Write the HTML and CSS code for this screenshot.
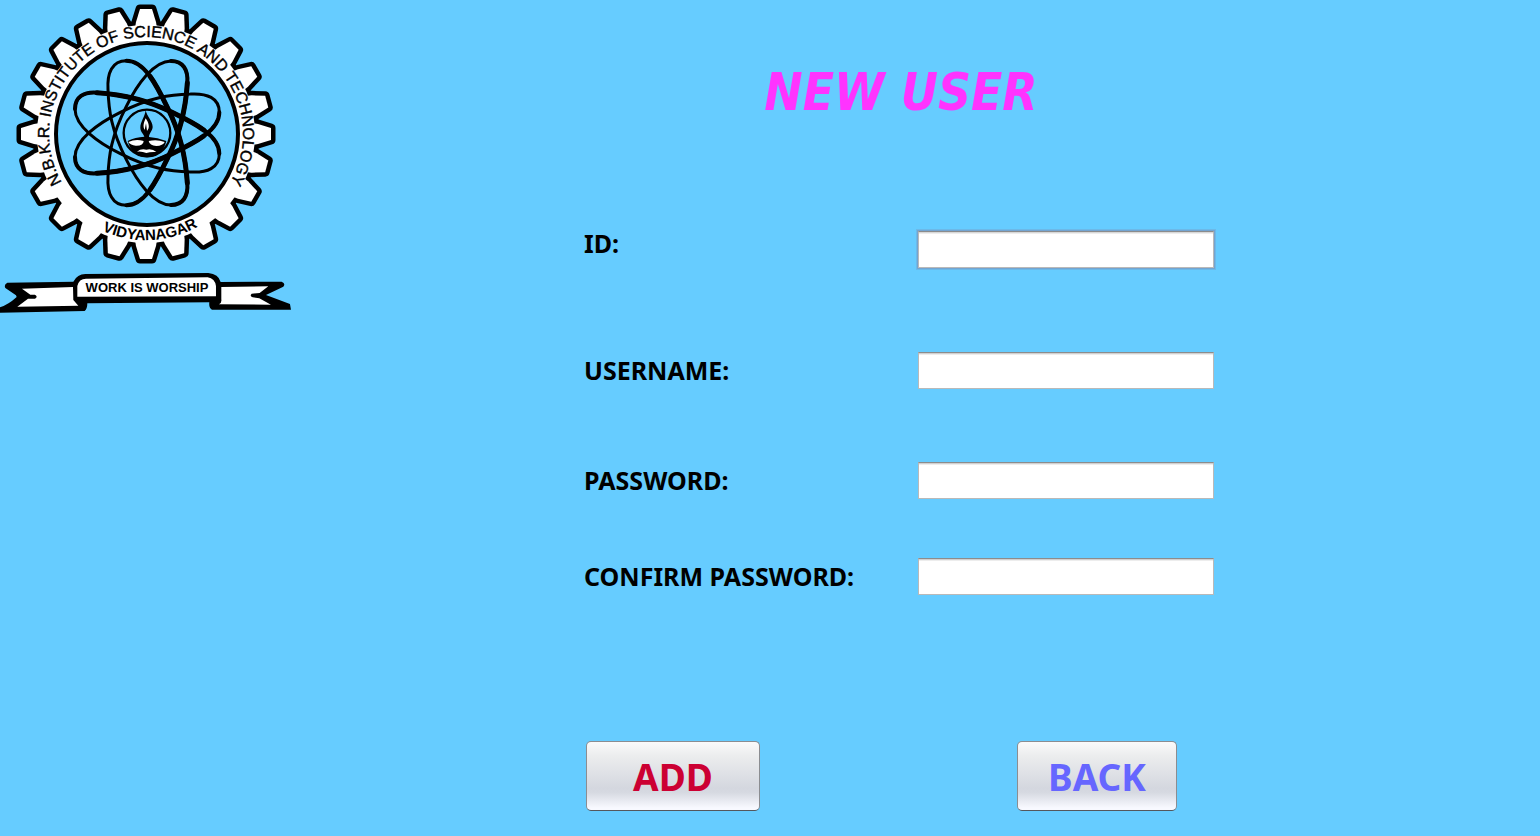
FILE: index.html
```html
<!DOCTYPE html>
<html lang="en">
<head>
<meta charset="utf-8">
<title>New User</title>
<link rel="stylesheet" href="styles.css">
</head>
<body class="page">
<header class="brand">
<svg class="logo" viewBox="0 0 292 316" role="img" aria-label="N.B.K.R. Institute of Science and Technology, Vidyanagar">
  <defs>
    <path id="tooth" d="M-11 -106 L-10 -112 L-6 -125 H6 L10 -112 L11 -106 Z"/>
    <g id="quarter">
      <use href="#tooth"/>
      <use href="#tooth" transform="rotate(15)"/>
      <use href="#tooth" transform="rotate(30)"/>
      <use href="#tooth" transform="rotate(45)"/>
      <use href="#tooth" transform="rotate(60)"/>
      <use href="#tooth" transform="rotate(75)"/>
    </g>
    <g id="gear">
      <circle r="109"/>
      <use href="#quarter"/>
      <use href="#quarter" transform="rotate(90)"/>
      <use href="#quarter" transform="rotate(180)"/>
      <use href="#quarter" transform="rotate(270)"/>
    </g>
    <path id="arc-top" d="M-84 48.500 A97 97 0 1 1 84 48.500"/>
    <path id="arc-bottom" d="M-93 51 A106 106 0 0 0 93 51"/>
    <g id="orbit">
      <path stroke-width="9" d="M-62 -217 C-105 -217 -120 -180 -117 -130 C-115 -70 -108 -10 -62 80 C-30 145 20 216 72 216 C108 216 124 190 121 150 C116 70 100 0 62 -75 C30 -140 -5 -217 -62 -217 Z"/>
      <path stroke-width="12" d="M-62 -217 C-5 -217 30 -140 62 -75 C100 0 116 70 121 150 C124 190 108 216 72 216"/>
      <path stroke-width="15" d="M9 -170 C29 -143 46 -108 62 -75 C100 0 116 70 121 150"/>
    </g>
  </defs>
  <g transform="translate(146 134)">
    <use href="#gear" class="gear-line"/>
    <use href="#gear" class="gear-fill"/>
    <circle class="hub" r="91" cx="1"/>
    <text class="motto-ring"><textPath href="#arc-top" startOffset="50%" text-anchor="middle">N.B.K.R. INSTITUTE OF SCIENCE AND TECHNOLOGY</textPath></text>
    <text class="motto-ring motto-town"><textPath href="#arc-bottom" startOffset="52%" text-anchor="middle">VIDYANAGAR</textPath></text>
  </g>
  <g class="atom" transform="translate(147 133) scale(.3333)">
    <use href="#orbit"/>
    <use href="#orbit" transform="matrix(1 0 0 -1 0 0)"/>
    <use href="#orbit" transform="matrix(0 -1 -1 0 0 0)"/>
    <use href="#orbit" transform="matrix(0 1 -1 0 0 0)"/>
  </g>
  <g transform="translate(110 95) scale(.3333)">
    <circle class="lamp-ring" cx="111" cy="114" r="70"/>
    <path d="M107 46 C105 65 91 80 91 98 C91 110 101 117 103 125 Q76 126 53 138 C60 168 83 187 111 187 C140 187 163 167 169 138 Q142 127 117 126 C117 115 128 107 128 96 C128 79 111 65 107 46 Z"/>
    <path class="white" d="M107 70 C101 84 98 94 104 105 L108 85 L111 108 C121 98 116 83 107 70 Z"/>
    <path class="white" d="M55 141 Q77 131 101 138 Q100 153 77 152 Q62 151 55 141 Z"/>
    <path class="white" d="M116 138 Q141 132 164 141 Q159 152 139 153 Q119 151 116 138 Z"/>
    <path class="white" d="M81 170 Q93 160 109 164 Q127 160 139 171 Q121 170 109 174 Q95 168 81 170 Z"/>
  </g>
  <g transform="translate(0 260) scale(.3333)">
    <path d="M22 68 L220 65 Q232 42 256 42 L625 39 Q656 42 662 66 L845 65 Q858 71 850 80 L798 105 L870 132 L873 149 L636 149 Q626 144 628 127 L262 130 Q262 147 254 153 L0 158 V142 Q25 134 50 111 L48 106 L16 84 Q11 74 22 68 Z"/>
    <path class="white" d="M66 86 L219 81 L220 120 L235 137 L52 140 L84 116 H105 Q115 110 105 104 H91 Z"/>
    <path class="white" d="M664 81 L805 79 L779 99 L755 101 Q748 108 758 112 L778 115 L813 134 L657 133 Q666 129 664 118 Z"/>
    <path class="white" d="M232 110 V78 Q237 56 258 56 L623 52 Q645 56 648 78 V109 Z"/>
  </g>
  <text class="motto" x="147" y="292" text-anchor="middle">WORK IS WORSHIP</text>
</svg>
</header>
<main class="content">
<form class="form">
  <h1 class="title">NEW USER</h1>
  <div class="row row-id"><label class="label" for="id">ID:</label><input class="field field-active" id="id" type="text"></div>
  <div class="row row-user"><label class="label" for="username">USERNAME:</label><input class="field" id="username" type="text"></div>
  <div class="row row-pass"><label class="label" for="password">PASSWORD:</label><input class="field" id="password" type="password"></div>
  <div class="row row-confirm"><label class="label" for="confirm">CONFIRM PASSWORD:</label><input class="field" id="confirm" type="password"></div>
  <div class="actions"><button class="button button-add" type="submit">ADD</button><button class="button button-back" type="button">BACK</button></div>
</form>
</main>
</body>
</html>
```
FILE: styles.css
```css
* { box-sizing: border-box; }
.page {
  margin: 0;
  min-height: 100vh;
  background: #66ccff;
  display: grid;
  grid-template-columns: 292px 1fr;
  align-items: start;
  font-family: "Noto Sans", "Open Sans", sans-serif;
}
.logo { display: block; width: 100%; }
.gear-line { fill: #000; stroke: #000; stroke-width: 9px; stroke-linejoin: round; }
.gear-fill { fill: #fff; }
.hub { fill: #66ccff; stroke: #000; stroke-width: 4px; }
.motto-ring { font: 16px "Liberation Sans", Arial, sans-serif; stroke: #000; stroke-width: .4px; }
.motto-town { font-size: 15px; font-weight: bold; stroke: none; }
.atom { fill: none; stroke: #000; stroke-linecap: round; }
.lamp-ring { fill: none; stroke: #000; stroke-width: 7px; }
.white { fill: #fff; }
.motto { font: bold 13px "Liberation Sans", Arial, sans-serif; }
.content { padding: 56px 34px 24px 0; display: flex; justify-content: center; }
.form { width: 100%; max-width: 630px; }
.title {
  margin: 0 0 101px 4px;
  text-align: center;
  font-family: "DejaVu Sans Condensed", "DejaVu Sans", sans-serif;
  font-stretch: condensed;
  font-size: 51px;
  line-height: 74px;
  font-style: italic;
  font-weight: bold;
  color: #ff33ff;
}
.row { display: grid; grid-template-columns: 1fr 296px; align-items: center; }
.row-id { align-items: start; margin-bottom: 84px; }
.row-user { margin-bottom: 73px; }
.row-pass { margin-bottom: 59px; }
.label { padding-bottom: 2px; font-size: 25px; line-height: 24px; font-weight: bold; color: #000; }
.field {
  width: 100%;
  height: 37px;
  padding: 4px 8px;
  border: 1px solid #b9b9b9;
  border-top-color: #8c8c8c;
  border-radius: 0;
  background: #fff;
  box-shadow: inset 0 1px #d0d0d0, inset 0 2px #ededed;
  font: 20px "Noto Sans", sans-serif;
  outline: none;
}
.field-active, .field:focus { box-shadow: inset 0 1px #d8d8d8, inset 0 2px #eee, 0 0 0 1px #73a4d1, 0 0 0 2px #6cb9e8; }
.actions { margin: 146px 37px 0 2px; display: flex; justify-content: space-between; }
.button {
  height: 70px;
  padding: 0;
  border: 1px solid #8b8d91;
  border-bottom-color: #55575c;
  border-radius: 5px;
  background: linear-gradient(#fafafa, #ecedee 20%, #d4d7df 68%, #d6d9e1 74%, #f8f9ff 97%);
  font: bold 37px "Noto Sans", sans-serif;
}
.button-add { width: 174px; color: #cc0033; }
.button-back { width: 160px; color: #6666ff; }
```
